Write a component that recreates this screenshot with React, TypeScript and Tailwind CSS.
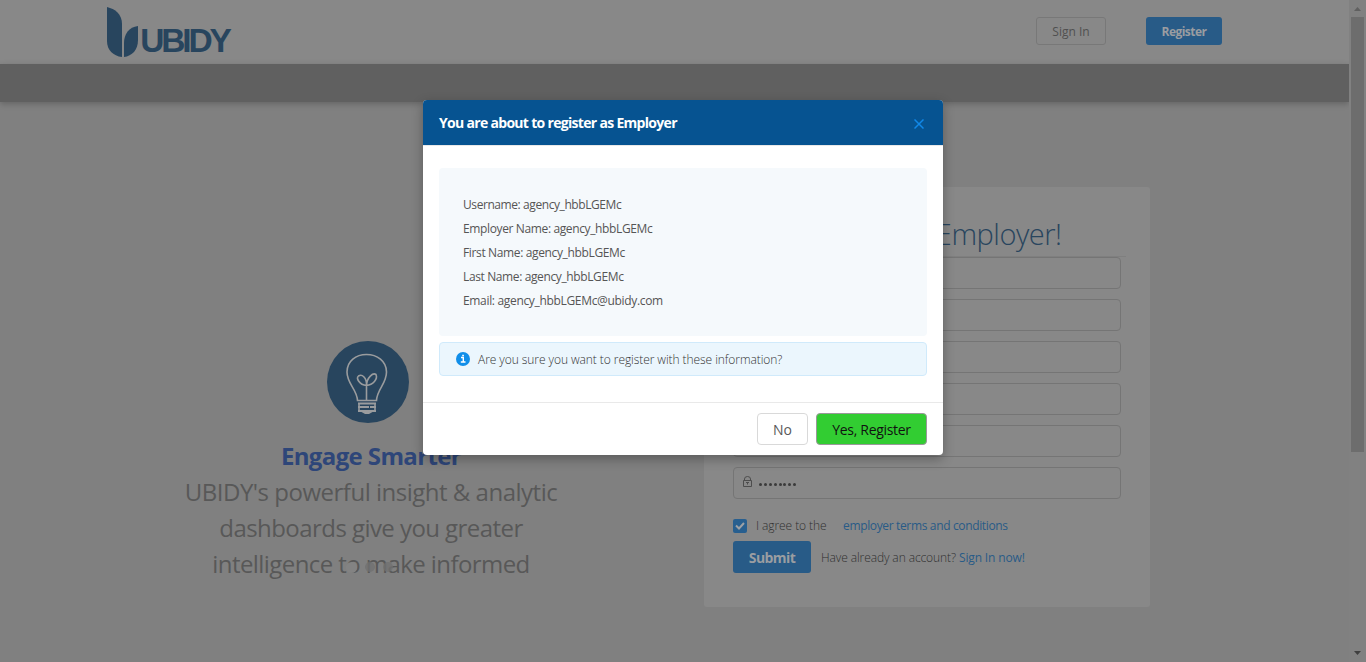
import React from "react";

const details = [
  { text: "Username: agency_hbbLGEMc", cls: "tracking-[-0.42px]" },
  { text: "Employer Name: agency_hbbLGEMc", cls: "tracking-[-0.37px]" },
  { text: "First Name: agency_hbbLGEMc", cls: "tracking-[-0.36px]" },
  { text: "Last Name: agency_hbbLGEMc", cls: "tracking-[-0.38px]" },
  { text: "Email: agency_hbbLGEMc@ubidy.com", cls: "tracking-[-0.33px]" },
];

function Logo() {
  return (
    <svg width="127" height="52" viewBox="0 0 127 52" className="block">
      <path d="M1 0C9 2 16 7 16 17V50C7 49 1 43 1 34Z" fill="#28455e" />
      <path d="M32 19V33C32 43 26 49 18 50V36C18 27 23 20 32 19Z" fill="#28455e" />
      <text x="34.300" y="45.300" textLength="91.500" lengthAdjust="spacing" fontFamily="Liberation Sans, sans-serif" fontWeight="700" fontSize="33.500" fill="#28455e">UBIDY</text>
    </svg>
  );
}

function Bulb() {
  return (
    <svg width="82" height="82" viewBox="0 0 82 82" className="block" fill="none" stroke="#9a9c9e" strokeWidth="1.6">
      <circle cx="41" cy="41" r="41" fill="#28455e" stroke="none" />
      <path d="M30.500 59.500C30 48 20 43 20 31C20 20 29 13.500 39.500 13.500S59.500 20 59.500 31C59.500 43 50 48 49.500 59.500Z" />
      <path d="M39.500 59V44M39.500 44.500C32 44 29 37 31.500 35C35 32.500 40 37 39.500 44.500ZM39.500 44.500C40 36 46 31.500 49 33.500C51 38 46 44 39.500 44.500Z" />
      <path d="M31 62.500H49M31 66H42M43 66H49M31 70H49" strokeWidth="1.8" />
      <path d="M32 62V70M48 62V70" />
      <path d="M34.500 71H45.500L42 73H38Z" fill="#9a9c9e" stroke="none" />
    </svg>
  );
}

export default function App() {
  return (
    <div className="relative flex h-[662px] w-[1366px] overflow-hidden bg-[#808080] font-['Open_Sans',sans-serif] text-[12px] text-[#505050]">
      <div className="flex w-[1349px] flex-col">
        <header className="flex h-16 shrink-0 items-start justify-between bg-[#888888] pl-[106px] pr-[127px]">
          <div className="pt-[7px]"><Logo /></div>
          <div className="flex gap-10 pt-[17px]">
            <button className="flex h-7 w-[70px] items-center justify-center rounded-[3px] border border-[#787878] pt-[2px] text-[#505050]">
              <span>Sign In</span>
            </button>
            <button className="flex h-7 w-[76px] items-center justify-center rounded-[3px] bg-[#285b87] pt-[2px] font-bold text-[#9a9da1]">
              <span className="tracking-[-0.55px]">Register</span>
            </button>
          </div>
        </header>
        <div className="h-[38px] shrink-0 bg-[#606060] shadow-[0_2px_6px_rgba(0,0,0,0.22)]" />
        <main className="flex flex-1 items-start">
          <section className="flex w-[704px] flex-col items-center pl-[38px] pt-[239px]">
            <div className="mr-[6px]"><Bulb /></div>
            <h2 className="mt-[15px] h-9 text-[24px] font-bold leading-9 text-[#2e4679]"><span className="tracking-[-0.62px]">Engage Smarter</span></h2>
            <div className="relative text-center text-[24px] leading-9 text-[#585858]">
              <p><span className="tracking-[-0.49px]">UBIDY's powerful insight &amp; analytic</span></p>
              <p><span className="tracking-[-0.56px]">dashboards give you greater</span></p>
              <p><span className="tracking-[-0.57px]">intelligence to make informed</span></p>
              <div className="absolute left-[161px] top-[88px] flex gap-2">
                <i className="h-[11px] w-[11px] rounded-full bg-[#838383]" />
                <i className="h-[10px] w-[10px] rounded-full bg-[#707070]/80" />
                <i className="h-[10px] w-[10px] rounded-full bg-[#707070]/80" />
              </div>
            </div>
          </section>
          <section className="mt-[85px] flex h-[420px] w-[446px] flex-col rounded-[3px] bg-[#888888] px-[29px] pt-[26px]">
            <h1 className="-mx-[5px] h-[44px] border-b border-[#7f7f7f] text-center text-[29px] font-light leading-[41px] text-[#28455e]"><span className="tracking-[-0.48px]">Register as Employer!</span></h1>
            <div className="flex flex-col gap-[10px]">
              {[0, 1, 2, 3, 4].map((n) => <div key={n} className="h-8 rounded border border-[#757575]" />)}
              <div className="flex h-8 items-center rounded border border-[#757575] pl-[9px]">
                <svg width="9" height="11" viewBox="0 0 9 11" fill="none" stroke="#4d4d4d" strokeWidth="1" className="-mt-[3px]">
                  <path d="M.5 4.500H8.500V10.500H.5ZM1.500 4.500V3A3 2.500 0 0 1 7.500 3V4.500M4.500 6V8.500M3 6.500H6" />
                </svg>
                <div className="ml-[7px] mt-[3px] flex gap-[1.9px]">
                  {[0, 1, 2, 3, 4, 5, 6, 7].map((n) => <i key={n} className="h-[3px] w-[3px] rounded-full bg-[#3b3b3b]" />)}
                </div>
              </div>
            </div>
            <div className="mt-[18px] flex h-[18px] items-center">
              <span className="flex h-[14px] w-[14px] items-center justify-center rounded-[2px] bg-[#285f8f]">
                <svg width="10" height="8" viewBox="0 0 10 8" fill="none" stroke="#9da1a5" strokeWidth="2"><path d="M1 3.500L4 6.500L9 1" /></svg>
              </span>
              <span className="ml-[9px] w-[87px] whitespace-nowrap font-light tracking-[-0.07px] text-[#303030]">I agree to the</span>
              <span className="whitespace-nowrap tracking-[-0.35px] text-[#285b87]">employer terms and conditions</span>
            </div>
            <div className="mt-[6px] flex h-8 items-center">
              <button className="h-8 w-[78px] rounded-[3px] bg-[#285b87] pt-px text-[14px] font-bold text-[#9a9da1]"><span className="tracking-[-0.6px]">Submit</span></button>
              <p className="ml-[10px] whitespace-nowrap pt-[2px] font-light text-[#303030]"><span className="tracking-[-0.1px]">Have already an account?</span> <span className="font-normal tracking-[-0.15px] text-[#285b87]">Sign In now!</span></p>
            </div>
          </section>
        </main>
      </div>
      <div className="flex w-[17px] flex-col items-center justify-between bg-[#818181] py-[7px]">
        <div className="flex w-[17px] flex-col items-center">
          <svg width="7" height="4" viewBox="0 0 7 4"><path d="M0 4L3.500 0L7 4Z" fill="#606060" /></svg>
          <div className="mt-[6px] h-[435px] w-[13px] bg-[#6d6d6d]" />
        </div>
        <svg width="7" height="4" viewBox="0 0 7 4"><path d="M0 0H7L3.500 4Z" fill="#3f3f3f" /></svg>
      </div>

      <div role="dialog" className="absolute left-[423px] top-[100px] flex h-[355px] w-[520px] flex-col overflow-hidden rounded bg-white shadow-[0_4px_12px_rgba(0,0,0,0.3)]">
        <div className="flex h-[45px] shrink-0 items-center justify-between bg-[#065391] pl-4 pr-[19px] text-[14px] font-bold text-white">
          <span className="tracking-[-0.69px]">You are about to register as Employer</span>
          <svg width="10" height="10" viewBox="0 0 10 10" stroke="#1188e8" strokeWidth="1.5" className="mt-[3px]"><path d="M.5 .5L9.500 9.500M9.500 .5L.5 9.500" /></svg>
        </div>
        <div className="flex flex-1 flex-col border-t border-[#e8e8e8] px-4 pt-[22px]">
          <div className="h-[168px] rounded bg-[#f5f9fc] px-6 pt-[25px] leading-6 text-[#555]">
            {details.map((d) => <p key={d.text}><span className={d.cls}>{d.text}</span></p>)}
          </div>
          <div className="mt-[6px] flex h-[34px] items-center rounded border border-[#d0eafb] bg-[#ebf6fd] pl-4 font-light text-[#333]">
            <svg width="14" height="14" viewBox="0 0 14 14" className="-mt-px"><circle cx="7" cy="7" r="7" fill="#108ee9" /><path d="M5 5.500H7.300V10M4.800 10H9.500M6.200 3.500H7.900" fill="none" stroke="white" strokeWidth="1.400" /></svg>
            <span className="ml-2 pt-[2px] tracking-[-0.07px]">Are you sure you want to register with these information?</span>
          </div>
        </div>
        <div className="flex h-[53px] shrink-0 justify-end gap-2 border-t border-[#e9e9e9] px-4 pt-[10px] text-[14px]">
          <button className="h-8 w-[51px] rounded border border-[#d9d9d9] pt-px text-[#595959]"><span>No</span></button>
          <button className="h-8 w-[111px] rounded border border-[#999] bg-[#32cd32] pt-px text-[#111]"><span className="tracking-[-0.3px]">Yes, Register</span></button>
        </div>
      </div>
    </div>
  );
}
